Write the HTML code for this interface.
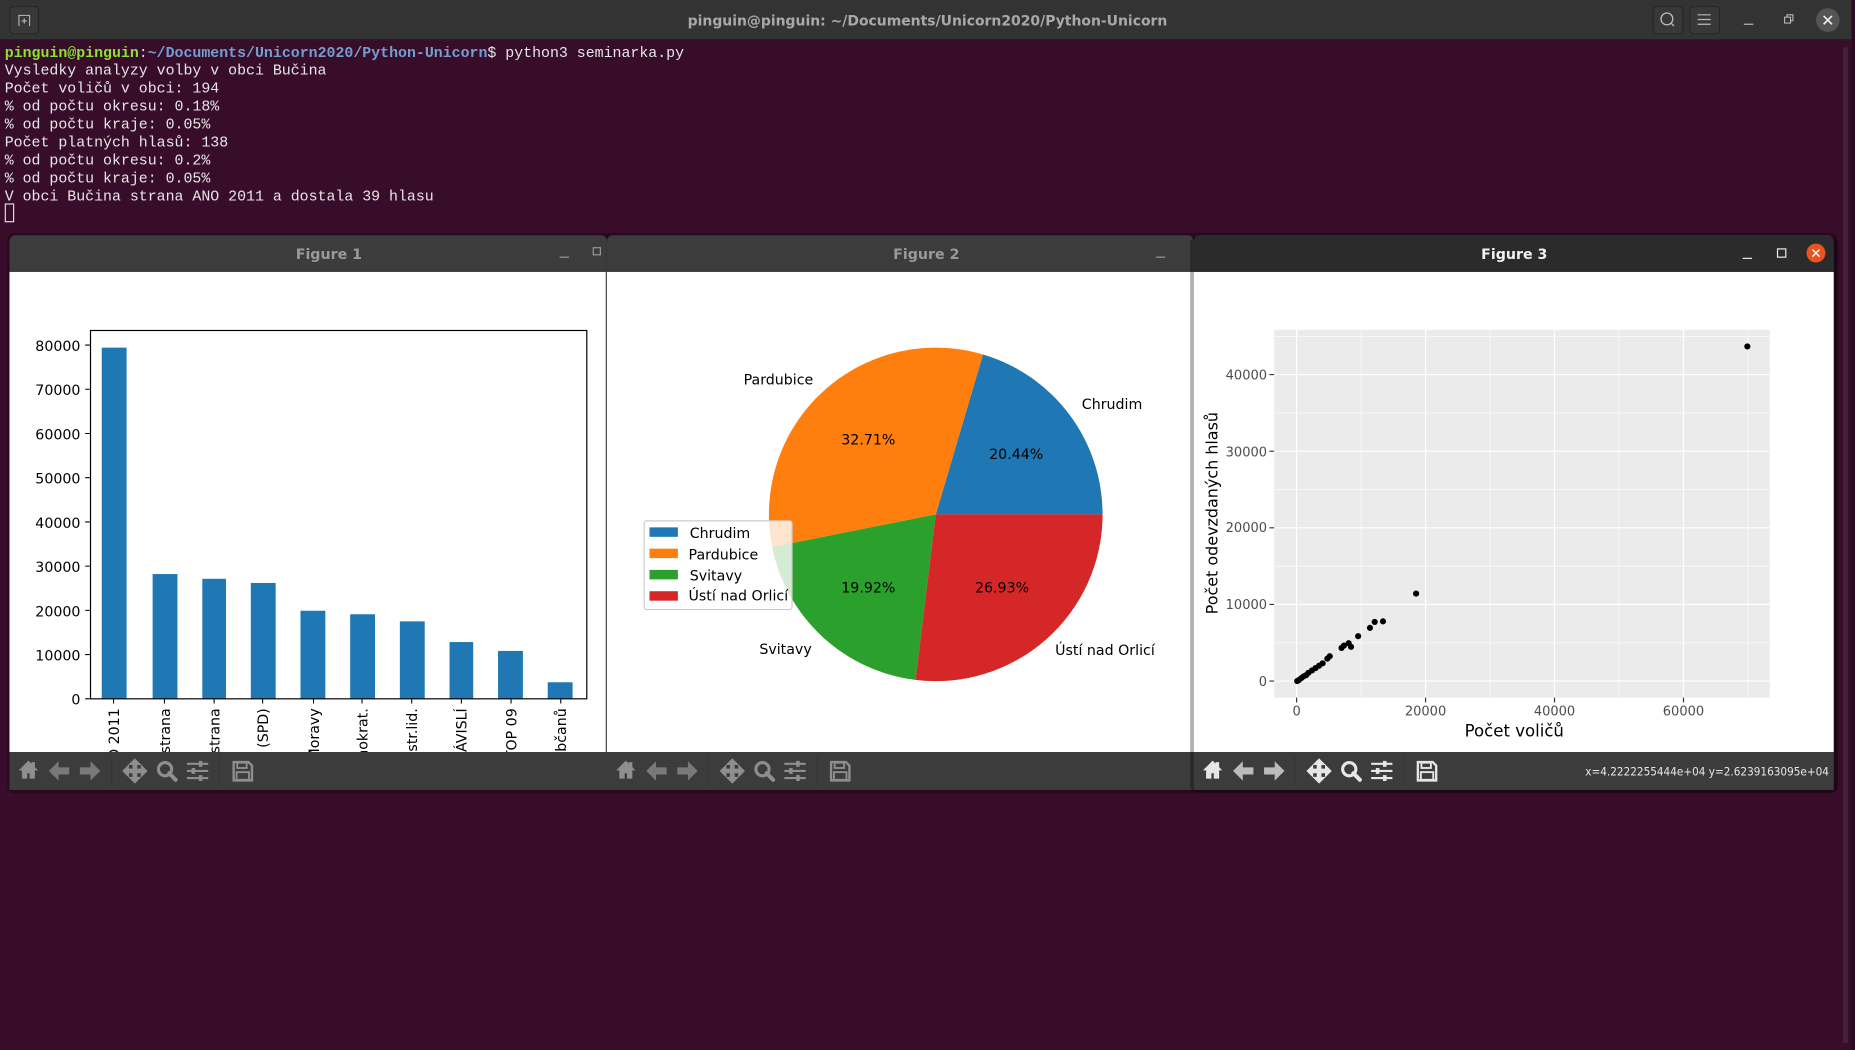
<!DOCTYPE html>
<html><head><meta charset="utf-8">
<style>
html,body{margin:0;padding:0;background:#380d2a;overflow:hidden}
svg{display:block}
.mono{font-family:"Liberation Mono","DejaVu Sans Mono",monospace;font-size:12.6px}
.sans{font-family:"DejaVu Sans","Liberation Sans",sans-serif}
</style></head><body>
<svg width="1855" height="1050" viewBox="0 0 1568 888" preserveAspectRatio="none" xmlns="http://www.w3.org/2000/svg">
<defs>
<clipPath id="c1"><rect x="8" y="230" width="505" height="406"/></clipPath>
<g id="tb">
 <path d="M-7 7 L0 0 L7 7 L5 7 L5 14 L1.5 14 L1.5 9.5 L-1.5 9.5 L-1.5 14 L-5 14 L-5 7 Z M3 1 L5 1 L5 4 L3 2 Z" transform="translate(24,644)"/>
 <path d="M42 652 L49 645 L49 649.5 L58 649.5 L58 654.5 L49 654.5 L49 659 Z" opacity="0.75"/>
 <path d="M84 652 L77 645 L77 649.5 L68 649.5 L68 654.5 L77 654.5 L77 659 Z" opacity="0.75"/>
 <path d="M114 642 L118.5 646.5 L115.5 646.5 L115.5 650.5 L119.5 650.5 L119.5 647.5 L124 652 L119.5 656.5 L119.5 653.5 L115.5 653.5 L115.5 657.5 L118.5 657.5 L114 662 L109.5 657.5 L112.5 657.5 L112.5 653.5 L108.5 653.5 L108.5 656.5 L104 652 L108.5 647.5 L108.5 650.5 L112.5 650.5 L112.5 646.5 L109.5 646.5 Z"/>
 <circle cx="139.5" cy="650.5" r="5.6" fill="none" stroke-width="2.6"/>
 <path d="M143 654 L148.5 659.5" stroke-width="3.4" stroke-linecap="round"/>
 <path d="M158 646 H176 M158 652 H176 M158 658 H176" stroke-width="1.8"/>
 <rect x="168" y="643.5" width="3" height="5" stroke="none"/><rect x="162" y="649.5" width="3" height="5" stroke="none"/><rect x="168" y="655.5" width="3" height="5" stroke="none"/>
 <path d="M197.5 644.5 H210 L213 647.5 V660 H197.5 Z" fill="none" stroke-width="2"/>
 <rect x="200.5" y="645" width="8" height="4.5" fill="none" stroke-width="1.6"/>
 <rect x="200" y="653" width="10.5" height="6.5" fill="none" stroke-width="1.6"/>
</g>
</defs>
<rect width="1568" height="888" fill="#380d2a"/>
<rect x="1558" y="40" width="4" height="842" fill="#46213b"/>
<rect x="1565" y="0" width="3" height="888" fill="#2a0a20"/>
<rect width="1565" height="34" fill="#333333"/>
<rect x="0" y="33" width="1565" height="1" fill="#222"/>
<rect x="8.5" y="5.5" width="24" height="23" rx="3" fill="#383838" stroke="#262626"/>
<path d="M16 22 V13 H25 V22 M20.5 15.5 V20 M18.3 17.7 H22.7" stroke="#bbb" fill="none" stroke-width="0.9"/>
<text x="784" y="21.5" text-anchor="middle" class="sans" font-size="11.8" font-weight="bold" fill="#a9a9a9">pinguin@pinguin: ~/Documents/Unicorn2020/Python-Unicorn</text>
<rect x="1397.5" y="5.5" width="25" height="23" rx="3" fill="#383838" stroke="#272727"/>
<circle cx="1409" cy="16" r="5" fill="none" stroke="#bbb" stroke-width="1.1"/><path d="M1412.5 19.5 L1415 22" stroke="#bbb" stroke-width="1.1"/>
<rect x="1428.5" y="5.5" width="25" height="23" rx="3" fill="#383838" stroke="#272727"/>
<path d="M1435 12.5 H1446 M1435 16.5 H1446 M1435 20.5 H1446" stroke="#bbb" stroke-width="1"/>
<path d="M1474 20.5 H1482" stroke="#bbb" stroke-width="1"/>
<rect x="1508.5" y="14.5" width="5" height="5" fill="none" stroke="#bbb" stroke-width="0.9"/><path d="M1510.5 14.5 V12.5 H1515.5 V17.5 H1513.5" fill="none" stroke="#bbb" stroke-width="0.9"/>
<circle cx="1545" cy="17" r="10" fill="#555"/>
<path d="M1541.5 13.5 L1548.5 20.5 M1548.5 13.5 L1541.5 20.5" stroke="#eee" stroke-width="1.4"/>
<g class="mono" fill="#e6e6e6">
<text x="4" y="48"><tspan fill="#8ae234" font-weight="bold">pinguin@pinguin</tspan><tspan fill="#ddd">:</tspan><tspan fill="#729fcf" font-weight="bold">~/Documents/Unicorn2020/Python-Unicorn</tspan><tspan>$ python3 seminarka.py</tspan></text>
<text x="4" y="63.2">Vysledky analyzy volby v obci Bučina</text>
<text x="4" y="78.4">Počet voličů v obci: 194</text>
<text x="4" y="93.6">% od počtu okresu: 0.18%</text>
<text x="4" y="108.8">% od počtu kraje: 0.05%</text>
<text x="4" y="124">Počet platných hlasů: 138</text>
<text x="4" y="139.2">% od počtu okresu: 0.2%</text>
<text x="4" y="154.4">% od počtu kraje: 0.05%</text>
<text x="4" y="169.6">V obci Bučina strana ANO 2011 a dostala 39 hlasu</text>
</g>
<rect x="4.5" y="172.5" width="7" height="15" fill="none" stroke="#ddd"/>

<rect x="6" y="197" width="1547" height="474" fill="#000" opacity="0.25" rx="6"/>

<!-- FIGURE 1 -->
<rect x="8" y="199" width="505" height="469" fill="#3c3c3c" rx="5"/>
<rect x="8" y="230" width="505" height="406" fill="#fff"/>
<text x="278" y="219" text-anchor="middle" class="sans" font-size="12" font-weight="bold" fill="#9a9a9a">Figure 1</text>
<path d="M473 217.5 H481" stroke="#999" stroke-width="1"/>
<rect x="501.5" y="209.5" width="6" height="6" fill="none" stroke="#999"/>
<g fill="#1f77b4">
<rect x="86" y="294" width="21" height="297"/>
<rect x="129" y="485.5" width="21" height="105.5"/>
<rect x="171" y="489.5" width="20" height="101.5"/>
<rect x="212" y="493" width="21" height="98"/>
<rect x="254" y="516.5" width="21" height="74.5"/>
<rect x="296" y="519.5" width="21" height="71.5"/>
<rect x="338" y="525.5" width="21" height="65.5"/>
<rect x="380" y="543" width="20" height="48"/>
<rect x="421" y="550.5" width="21" height="40.5"/>
<rect x="463" y="577" width="21" height="14"/>
</g>
<rect x="76.5" y="279.5" width="419.5" height="311.5" fill="none" stroke="#000" stroke-width="1"/>
<g stroke="#000" stroke-width="0.9">
<path d="M72 591 H76 M72 553.6 H76 M72 516.2 H76 M72 478.8 H76 M72 441.4 H76 M72 404 H76 M72 366.6 H76 M72 329.2 H76 M72 291.8 H76"/>
<path d="M96 591 V595 M139 591 V595 M181 591 V595 M222 591 V595 M265 591 V595 M306 591 V595 M348 591 V595 M390 591 V595 M432 591 V595 M474 591 V595"/>
</g>
<g class="sans" font-size="12" fill="#000" text-anchor="end">
<text x="68" y="596">0</text><text x="68" y="558.6">10000</text><text x="68" y="521.2">20000</text><text x="68" y="483.8">30000</text><text x="68" y="446.4">40000</text><text x="68" y="409">50000</text><text x="68" y="371.6">60000</text><text x="68" y="334.2">70000</text><text x="68" y="296.8">80000</text>
</g>
<g class="sans" font-size="12" fill="#000" text-anchor="end" clip-path="url(#c1)">
<text transform="translate(100.5,599) rotate(-90)">ANO 2011</text>
<text transform="translate(143.5,599) rotate(-90)">Pirátská strana</text>
<text transform="translate(185.5,599) rotate(-90)">Demokratická strana</text>
<text transform="translate(226.5,599) rotate(-90)">Svoboda (SPD)</text>
<text transform="translate(269.5,599) rotate(-90)">Komunistická str.Čech a Moravy</text>
<text transform="translate(310.5,599) rotate(-90)">Česká str.sociálně demokrat.</text>
<text transform="translate(352.5,599) rotate(-90)">Křesť.demokr.unie-Čs.str.lid.</text>
<text transform="translate(394.5,599) rotate(-90)">STAROSTOVÉ A NEZÁVISLÍ</text>
<text transform="translate(436.5,599) rotate(-90)">TOP 09</text>
<text transform="translate(478.5,599) rotate(-90)">Strana svobodných občanů</text>
</g>
<rect x="8" y="636" width="505" height="32" fill="#3c3c3c"/>
<g fill="#8e8e8e" stroke="#8e8e8e"><use href="#tb"/></g>
<path d="M94.5 640 V664 M185.5 640 V664" stroke="#353535"/>

<!-- FIGURE 2 -->
<rect x="513" y="199" width="496" height="469" fill="#3c3c3c" rx="5"/>
<rect x="513" y="230" width="496" height="406" fill="#fff"/>
<path d="M512.5 230 V636" stroke="#444"/>
<text x="783" y="219" text-anchor="middle" class="sans" font-size="12" font-weight="bold" fill="#9a9a9a">Figure 2</text>
<path d="M977 217.5 H985" stroke="#999" stroke-width="1"/>
<path d="M791 435 L932 435 A141 141 0 0 0 830.9 299.8 Z" fill="#1f77b4"/>
<path d="M791 435 L830.9 299.8 A141 141 0 0 0 652.7 462.7 Z" fill="#ff7f0e"/>
<path d="M791 435 L652.7 462.7 A141 141 0 0 0 773.9 575 Z" fill="#2ca02c"/>
<path d="M791 435 L773.9 575 A141 141 0 0 0 932 435 Z" fill="#d62728"/>
<g class="sans" font-size="12" fill="#000" text-anchor="middle">
<text x="859" y="388">20.44%</text><text x="734" y="376">32.71%</text><text x="734" y="501">19.92%</text><text x="847" y="501">26.93%</text>
<text x="658" y="325">Pardubice</text><text x="940" y="346">Chrudim</text><text x="664" y="553">Svitavy</text><text x="934" y="554">Ústí nad Orlicí</text>
</g>
<rect x="544.5" y="440.5" width="125" height="75" rx="2" fill="#fff" fill-opacity="0.8" stroke="#ccc"/>
<rect x="549" y="446" width="24" height="8" fill="#1f77b4"/>
<rect x="549" y="464" width="24" height="8" fill="#ff7f0e"/>
<rect x="549" y="482" width="24" height="8" fill="#2ca02c"/>
<rect x="549" y="500" width="24" height="8" fill="#d62728"/>
<g class="sans" font-size="12" fill="#000">
<text x="583" y="455">Chrudim</text><text x="582" y="473">Pardubice</text><text x="583" y="491">Svitavy</text><text x="582" y="508">Ústí nad Orlicí</text>
</g>
<rect x="513" y="636" width="496" height="32" fill="#3c3c3c"/>
<g fill="#8e8e8e" stroke="#8e8e8e" transform="translate(505,0)"><use href="#tb"/></g>
<path d="M598.5 640 V664 M690.5 640 V664" stroke="#353535"/>

<!-- FIGURE 3 -->
<rect x="1006" y="200" width="548" height="470" fill="#000" opacity="0.3" rx="6"/>
<rect x="1009" y="199" width="541" height="469" fill="#3c3c3c" rx="5"/>
<rect x="1009" y="199" width="541" height="31" fill="#2b2b2b" rx="5"/>
<rect x="1009" y="224" width="541" height="6" fill="#2b2b2b"/>
<rect x="1009" y="230" width="541" height="406" fill="#fff"/>
<text x="1280" y="219" text-anchor="middle" class="sans" font-size="12" font-weight="bold" fill="#f2f2f2">Figure 3</text>
<path d="M1473 218.5 H1481" stroke="#eee" stroke-width="1"/>
<rect x="1502.5" y="210.5" width="7" height="7" fill="none" stroke="#eee"/>
<circle cx="1535" cy="214" r="8" fill="#e95420"/>
<path d="M1532 211 L1538 217 M1538 211 L1532 217" stroke="#fff" stroke-width="1.2"/>
<rect x="1077" y="279" width="419" height="311" fill="#ebebeb"/>
<g stroke="#fff" stroke-width="0.5">
<path d="M1077 543.6 H1496 M1077 478.8 H1496 M1077 414 H1496 M1077 349.2 H1496 M1077 284.4 H1496 M1150.5 279 V590 M1259.5 279 V590 M1368.5 279 V590 M1477.5 279 V590"/>
</g>
<g stroke="#fff" stroke-width="1">
<path d="M1077 576 H1496 M1077 511.2 H1496 M1077 446.4 H1496 M1077 381.6 H1496 M1077 316.8 H1496 M1096 279 V590 M1205 279 V590 M1314 279 V590 M1423 279 V590"/>
</g>
<g stroke="#333" stroke-width="1">
<path d="M1073 576 H1077 M1073 511.2 H1077 M1073 446.4 H1077 M1073 381.6 H1077 M1073 316.8 H1077 M1096 590 V594 M1205 590 V594 M1314 590 V594 M1423 590 V594"/>
</g>
<g class="sans" font-size="11" fill="#4d4d4d" text-anchor="end">
<text x="1071" y="580">0</text><text x="1071" y="515">10000</text><text x="1071" y="450">20000</text><text x="1071" y="386">30000</text><text x="1071" y="321">40000</text>
</g>
<g class="sans" font-size="11" fill="#4d4d4d" text-anchor="middle">
<text x="1096" y="605">0</text><text x="1205" y="605">20000</text><text x="1314" y="605">40000</text><text x="1423" y="605">60000</text>
</g>
<text x="1280" y="623" text-anchor="middle" class="sans" font-size="14" fill="#000">Počet voličů</text>
<text transform="translate(1029,434) rotate(-90)" text-anchor="middle" class="sans" font-size="13.5" fill="#000">Počet odevzdaných hlasů</text>
<g fill="#000">
<circle cx="1477" cy="293" r="2.6"/><circle cx="1197" cy="502" r="2.6"/>
<circle cx="1162" cy="526" r="2.6"/><circle cx="1169" cy="525.5" r="2.6"/><circle cx="1158" cy="531" r="2.6"/>
<circle cx="1148" cy="538" r="2.6"/><circle cx="1140" cy="544" r="2.6"/><circle cx="1136" cy="546" r="2.6"/><circle cx="1134" cy="548" r="2.6"/><circle cx="1142" cy="547" r="2.6"/>
<circle cx="1124" cy="555" r="2.6"/><circle cx="1122" cy="557" r="2.6"/><circle cx="1118" cy="561" r="2.6"/><circle cx="1115" cy="563" r="2.6"/><circle cx="1112" cy="565" r="2.6"/>
<circle cx="1109" cy="567" r="2.6"/><circle cx="1106" cy="569" r="2.6"/><circle cx="1104" cy="571" r="2.6"/><circle cx="1102" cy="572" r="2.6"/><circle cx="1100" cy="573.5" r="2.6"/>
<circle cx="1098" cy="575" r="2.6"/><circle cx="1096.5" cy="576" r="2.6"/>
</g>
<rect x="1009" y="636" width="541" height="32" fill="#3c3c3c"/>
<g fill="#e6e6e6" stroke="#e6e6e6" transform="translate(1001,0)"><use href="#tb"/></g>
<path d="M1094.5 640 V664 M1186.5 640 V664" stroke="#353535"/>
<text x="1546" y="656" text-anchor="end" class="sans" font-size="10" textLength="206" lengthAdjust="spacingAndGlyphs" fill="#e6e6e6">x=4.2222255444e+04 y=2.6239163095e+04</text>
</svg>
</body></html>
